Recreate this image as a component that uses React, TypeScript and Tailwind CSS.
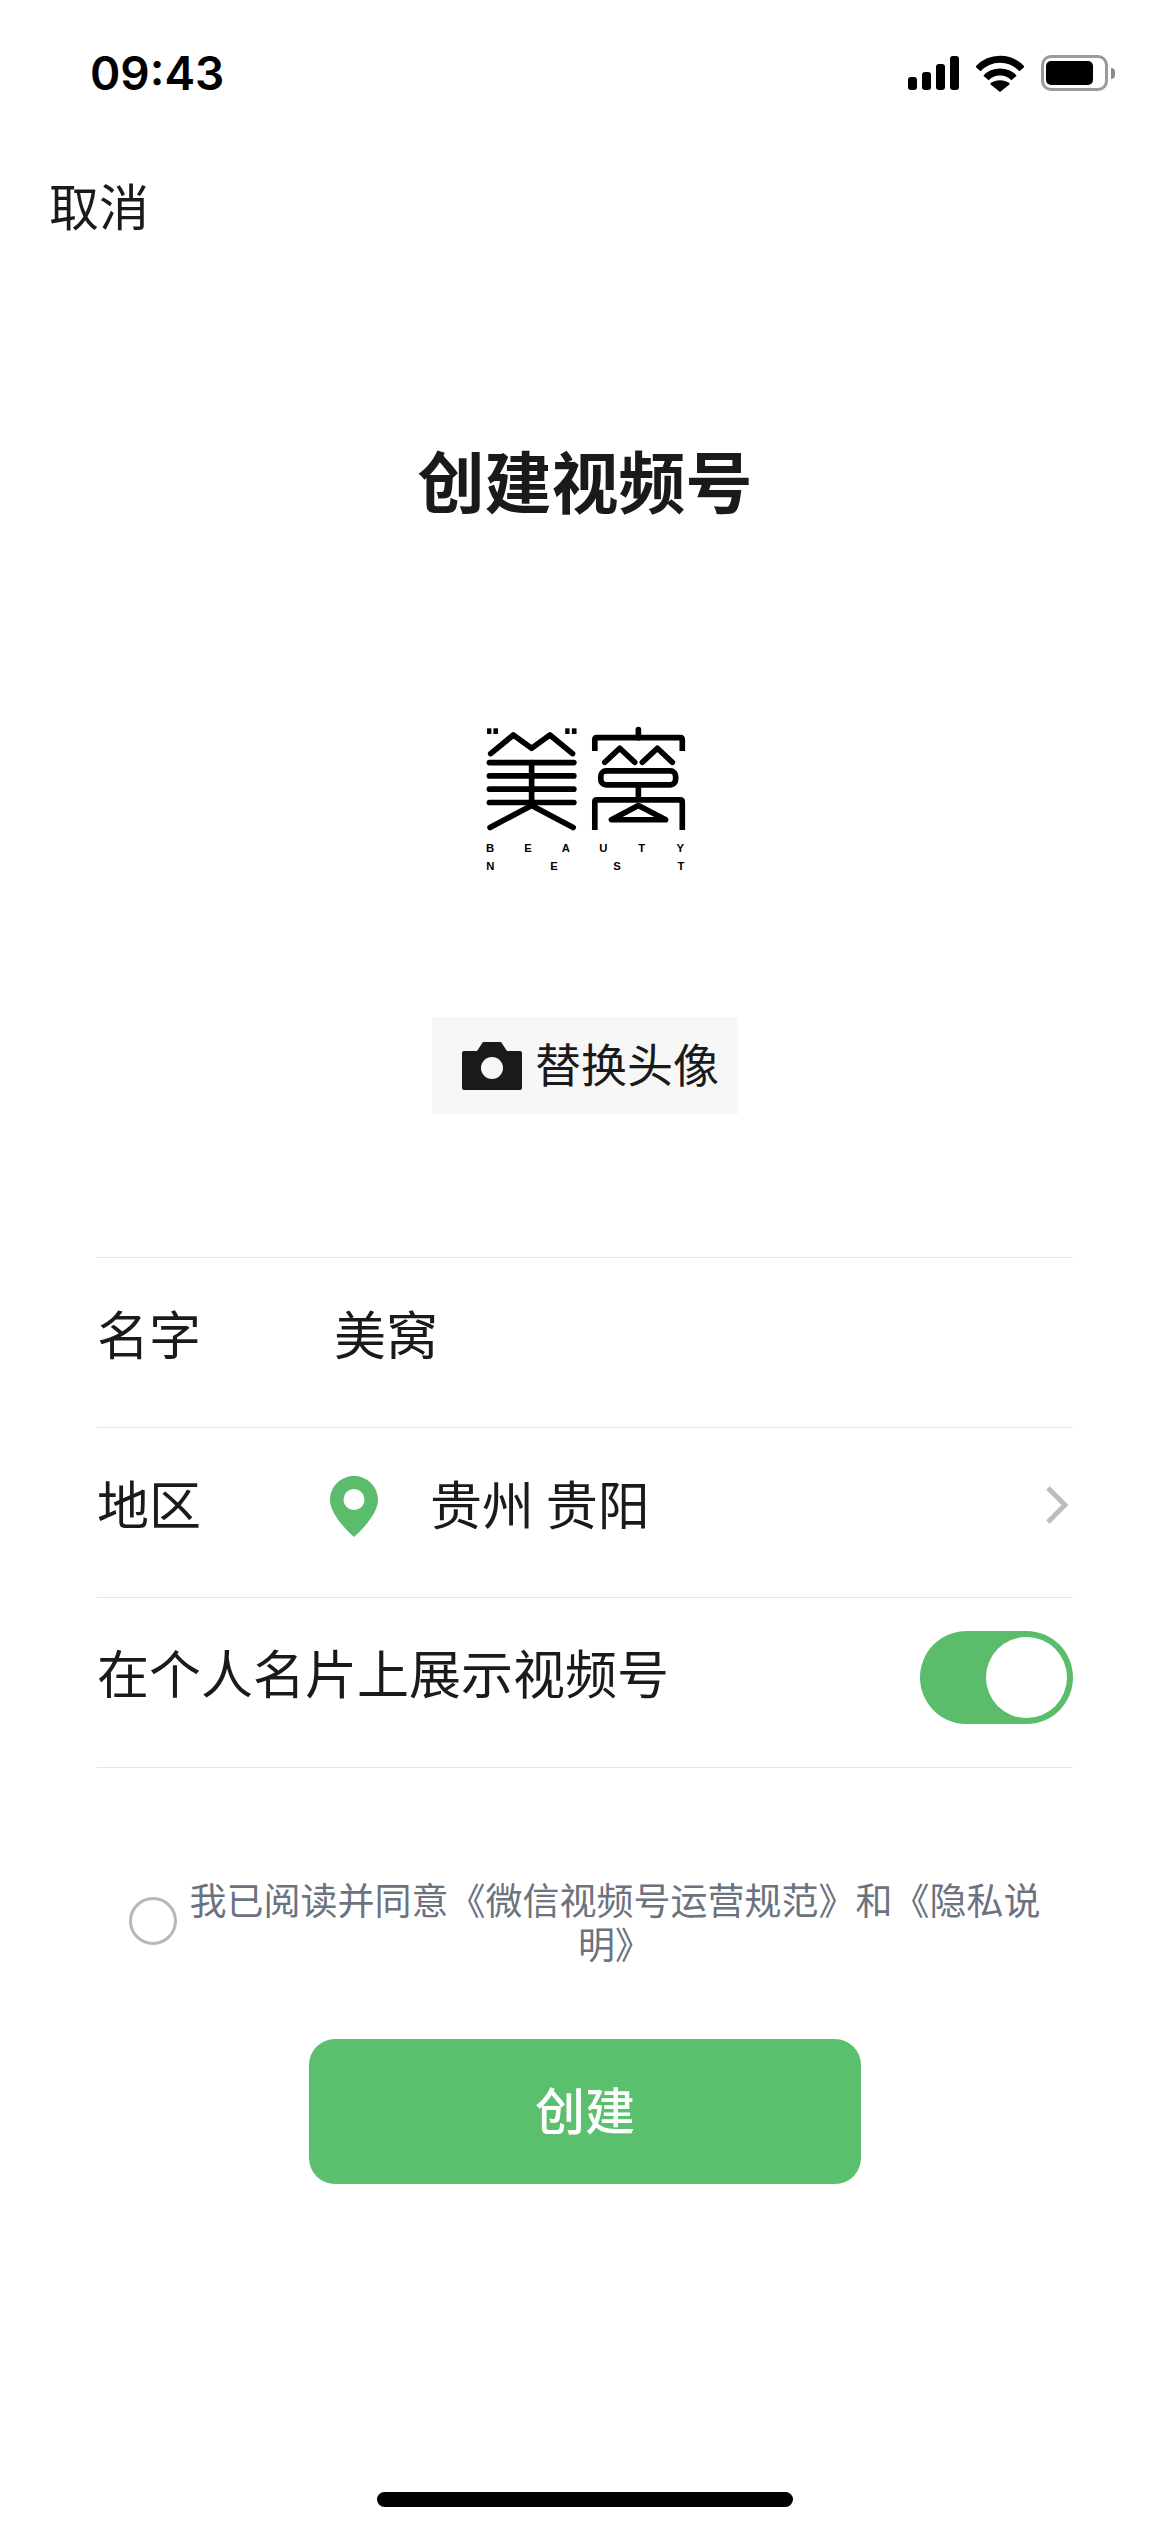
import React from 'react';

const cjk = { fontFamily: '"Noto Sans CJK SC", "Noto Sans", sans-serif' };

const StatusIcons = () => (
  <div className="flex items-center gap-[17px]">
    <svg width="51" height="34" viewBox="0 0 51 34" fill="#000">
      <rect x="0" y="21" width="9" height="13" rx="3" />
      <rect x="14" y="16" width="9" height="18" rx="3" />
      <rect x="28" y="8" width="9" height="26" rx="3" />
      <rect x="42" y="0" width="9" height="34" rx="3" />
    </svg>
    <svg width="48" height="37" viewBox="0 0 48 37" fill="none" stroke="#000" strokeWidth="7">
      <path d="M2 14C14 1 34 1 46 14" />
      <path d="M10 23C17 15 31 15 38 23" />
      <path d="M24 37L14 29C19 24 29 24 34 29Z" fill="#000" stroke="none" />
    </svg>
    <div className="flex items-center">
      <div className="w-[67px] h-[36px] rounded-[10px] border-[3px] border-[#9a9a9a] pl-[2px] py-[3px]">
        <div className="w-[47px] h-full rounded-[5px] bg-black" />
      </div>
      <div className="w-[4px] h-[11px] rounded-r-full bg-[#8a8a8a] ml-[3px]" />
    </div>
  </div>
);

const Logo = () => (
  <svg width="207" height="148" viewBox="130 80 620 445" fill="none" stroke="#000" strokeWidth="17" strokeLinecap="round" strokeLinejoin="round">
    <g fill="#000" stroke="none">
      <rect x="141" y="90" width="13" height="17" />
      <rect x="160" y="90" width="14" height="17" />
      <rect x="376" y="90" width="13" height="17" />
      <rect x="396" y="90" width="14" height="17" />
    </g>
    <path d="M152 166L220 110L275 150L330 110L398 166" />
    <path d="M148 193H402M148 233H402M148 273H402M148 313H402" />
    <path d="M275 193V322M275 322L150 388M275 322L400 388" />
    <path d="M596 94V118" />
    <path d="M465 158V124Q465 118 471 118H722Q728 118 728 124V158" strokeLinecap="butt" />
    <path d="M495 192L540 150L585 192M608 192L653 150L698 192" />
    <rect x="483" y="218" width="225" height="42" rx="16" />
    <path d="M596 260V305" strokeLinecap="butt" />
    <path d="M465 396V311Q465 305 471 305H722Q728 305 728 311V396" strokeLinecap="butt" />
    <path d="M596 322L515 365H678Z" />
    <g fill="#000" stroke="none" fontFamily='"Liberation Sans", sans-serif' fontWeight="700" fontSize="34" textAnchor="middle">
      <text x="150" y="462">B</text>
      <text x="264" y="462">E</text>
      <text x="378" y="462">A</text>
      <text x="491" y="462">U</text>
      <text x="606" y="462">T</text>
      <text x="722" y="462">Y</text>
      <text x="151" y="515">N</text>
      <text x="342" y="515">E</text>
      <text x="532" y="515">S</text>
      <text x="724" y="515">T</text>
    </g>
  </svg>
);

const Camera = () => (
  <svg width="60" height="48" viewBox="0 0 60 48">
    <path d="M2 9H15L21 0H39L45 9H58Q60 9 60 11V46Q60 48 58 48H2Q0 48 0 46V11Q0 9 2 9Z" fill="#1a1a1a" />
    <circle cx="30" cy="26" r="11" fill="#f7f7f7" />
  </svg>
);

const Pin = () => (
  <svg width="48" height="61" viewBox="0 0 48 61">
    <path fillRule="evenodd" d="M24 0C37.3 0 48 10.7 48 24C48 37 33 53 24 61C15 53 0 37 0 24C0 10.7 10.7 0 24 0ZM24 13A10.5 10.5 0 1 0 24 34A10.5 10.5 0 1 0 24 13Z" fill="#5bbd6c" />
  </svg>
);

export default function App() {
  return (
    <div className="w-[1170px] h-[2532px] bg-white flex flex-col text-[#1a1a1a] overflow-hidden" style={cjk}>
      <div className="h-[146px] shrink-0 flex items-center justify-between pl-[90px] pr-[55px]">
        <span className="text-[46px] font-semibold text-black" style={{ fontFamily: 'Inter, sans-serif' }}>09:43</span>
        <StatusIcons />
      </div>

      <div className="mt-[23px] pl-[49px] text-[50px] leading-[70px] h-[70px]">取消</div>

      <h1 className="mt-[192px] text-center text-[67px] leading-[96px] font-semibold">创建视频号</h1>

      <div className="mt-[198px] flex justify-center pl-[3px]">
        <Logo />
      </div>

      <div className="mt-[144px] flex justify-center">
        <div className="w-[306px] h-[97px] bg-[#f7f7f7] flex items-center pl-[30px] gap-[13px] text-[46px]">
          <Camera />
          <span className="pb-[6px]">替换头像</span>
        </div>
      </div>

      <div className="mt-[143px] mx-[97px] border-t border-[#e6e6e6]">
        <div className="h-[170px] pb-[20px] border-b border-[#e6e6e6] flex items-center text-[52px]">
          <span className="w-[237px]">名字</span>
          <span>美窝</span>
        </div>
        <div className="h-[170px] pb-[12px] border-b border-[#e6e6e6] flex items-center text-[52px]">
          <span className="w-[233px] pb-[8px]">地区</span>
          <Pin />
          <span className="ml-[52px] flex-1 pb-[8px]">贵州 贵阳</span>
          <svg className="mr-[5px] mb-[4px]" width="22" height="38" viewBox="0 0 22 38" fill="none" stroke="#bdbdbd" strokeWidth="5">
            <path d="M2 2L19 19L2 36" />
          </svg>
        </div>
        <div className="h-[170px] pb-[10px] border-b border-[#e6e6e6] flex items-center justify-between text-[52px]">
          <span className="pb-[12px]">在个人名片上展示视频号</span>
          <div className="w-[153px] h-[93px] rounded-full bg-[#5bbd6c] flex items-center justify-end pr-[6px]">
            <div className="w-[81px] h-[81px] rounded-full bg-white" />
          </div>
        </div>
      </div>

      <div className="mt-[109px] ml-[129px] w-[915px] flex items-center gap-[9px]">
        <div className="w-[48px] h-[48px] rounded-full border-[3px] border-[#b8b8b8] shrink-0" />
        <p className="text-[37px] leading-[44px] text-center text-[#6b7280]">我已阅读并同意《微信视频号运营规范》和《隐私说明》</p>
      </div>

      <div className="mt-[74px] flex justify-center">
        <div className="w-[552px] h-[145px] rounded-[26px] bg-[#5bc06e] flex items-center justify-center pb-[6px] text-white text-[50px] font-medium">创建</div>
      </div>

      <div className="mt-auto mb-[25px] flex justify-center">
        <div className="w-[416px] h-[15px] rounded-full bg-black" />
      </div>
    </div>
  );
}
